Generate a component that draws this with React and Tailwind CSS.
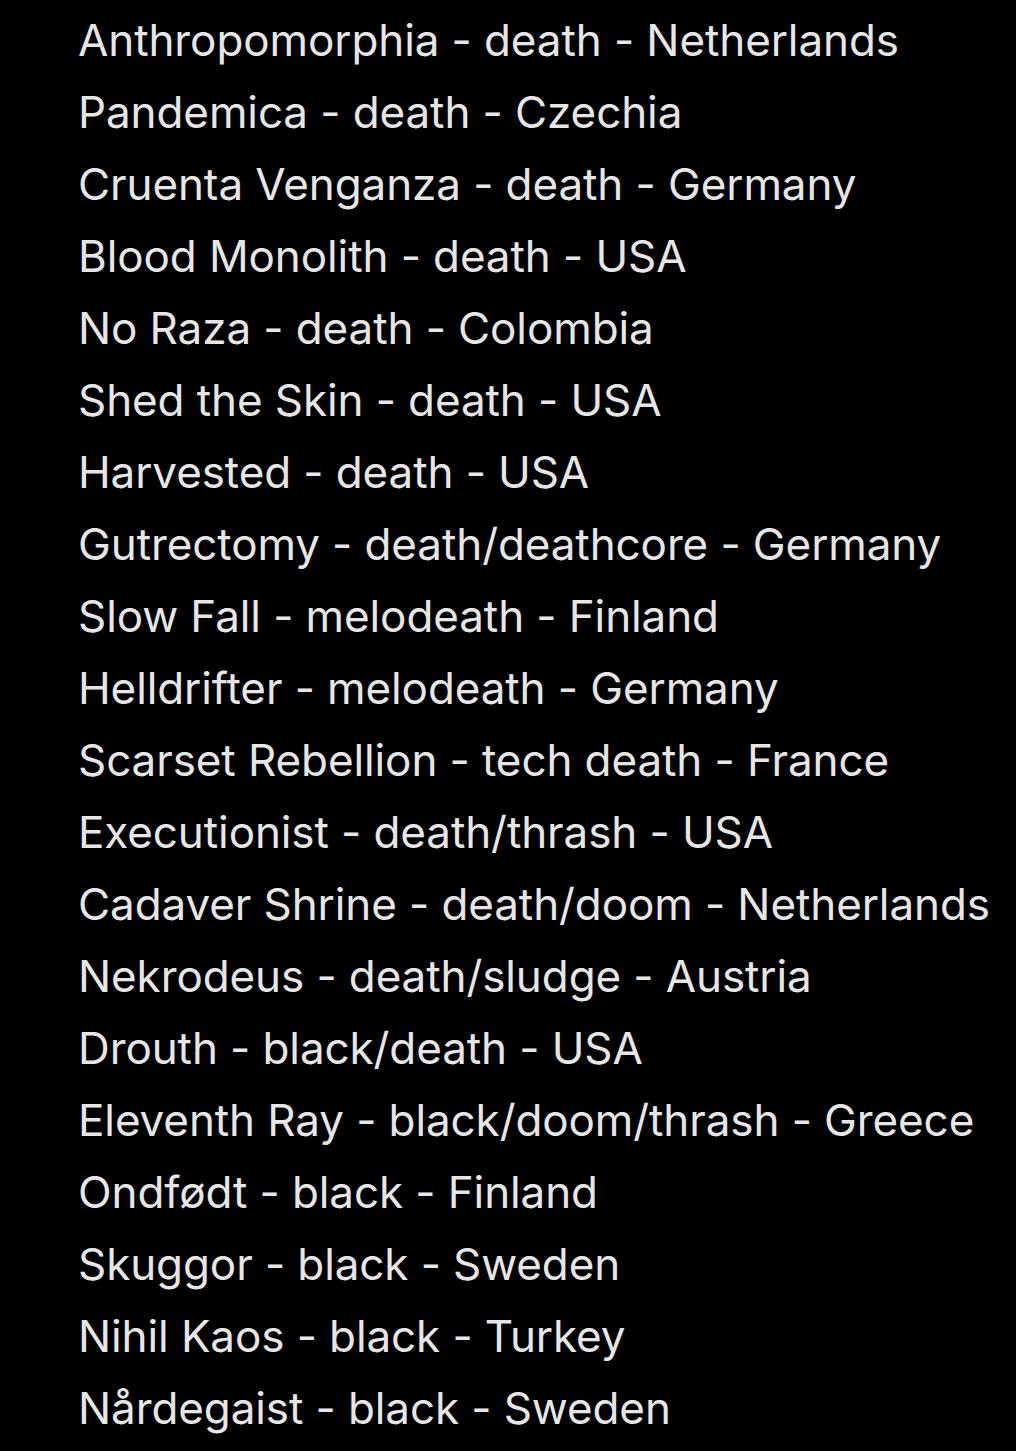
const bands = [
  "Anthropomorphia - death - Netherlands",
  "Pandemica - death - Czechia",
  "Cruenta Venganza - death - Germany",
  "Blood Monolith - death - USA",
  "No Raza - death - Colombia",
  "Shed the Skin - death - USA",
  "Harvested - death - USA",
  "Gutrectomy - death/deathcore - Germany",
  "Slow Fall - melodeath - Finland",
  "Helldrifter - melodeath - Germany",
  "Scarset Rebellion - tech death - France",
  "Executionist - death/thrash - USA",
  "Cadaver Shrine - death/doom - Netherlands",
  "Nekrodeus - death/sludge - Austria",
  "Drouth - black/death - USA",
  "Eleventh Ray - black/doom/thrash - Greece",
  "Ondfødt - black - Finland",
  "Skuggor - black - Sweden",
  "Nihil Kaos - black - Turkey",
  "Nårdegaist - black - Sweden",
];

export default function App() {
  return (
    <div className="min-h-screen w-full bg-black pt-[4px] pl-[78px] font-['Inter',sans-serif] text-[44px] leading-[72px] tracking-[-0.1px] text-[#e6e6e6]">
      {bands.map((b) => (
        <div key={b} className="whitespace-nowrap">
          {b}
        </div>
      ))}
    </div>
  );
}
